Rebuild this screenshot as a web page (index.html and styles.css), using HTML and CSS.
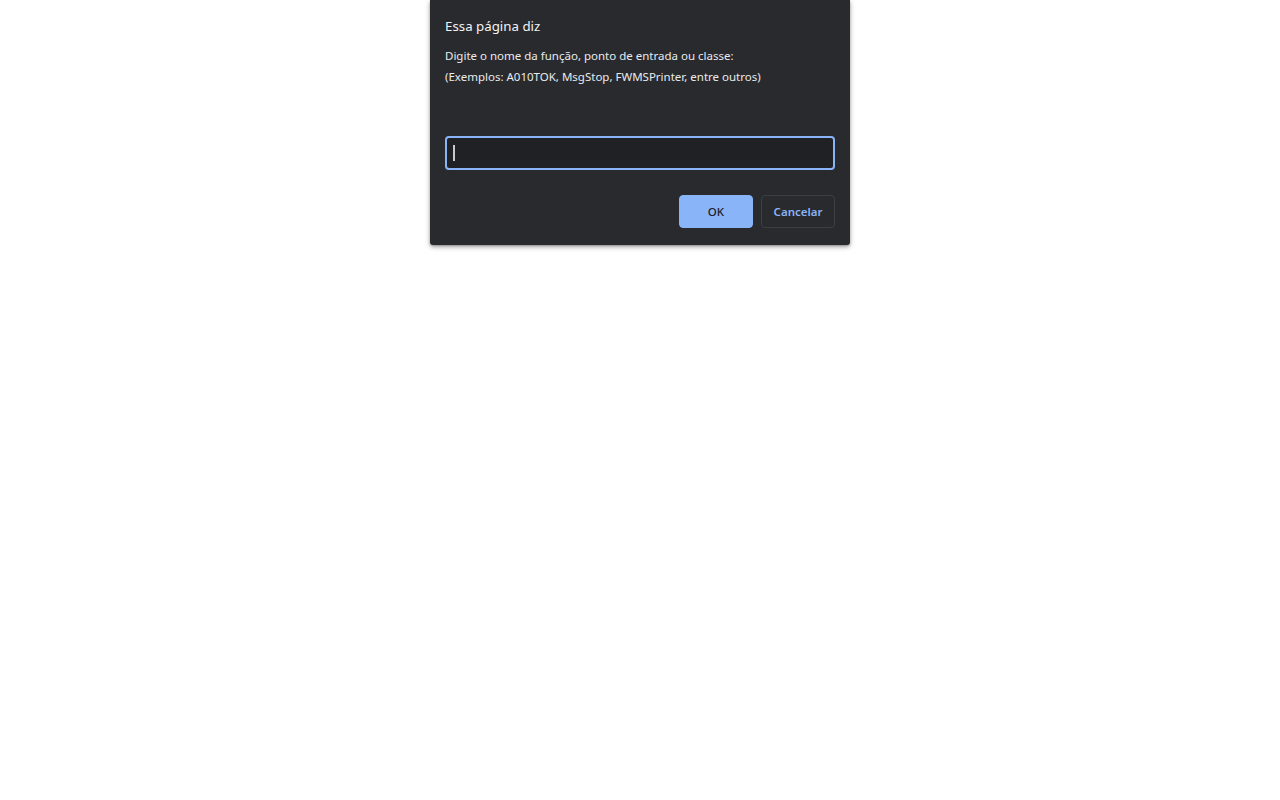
FILE: index.html
```html
<!DOCTYPE html>
<html lang="pt-BR">
<head>
<meta charset="utf-8">
<title>Essa página diz</title>
<link rel="stylesheet" href="styles.css">
</head>
<body>
<div class="overlay">
  <div class="dialog" role="dialog">
    <div class="title">Essa página diz</div>
    <div class="message">
      <div>Digite o nome da função, ponto de entrada ou classe:</div>
      <div>(Exemplos: A010TOK, MsgStop, FWMSPrinter, entre outros)</div>
    </div>
    <div class="field"><span class="caret"></span></div>
    <div class="actions">
      <button class="btn btn-ok">OK</button>
      <button class="btn btn-cancel">Cancelar</button>
    </div>
  </div>
</div>
</body>
</html>
```
FILE: styles.css
```css
html, body {
  margin: 0;
  padding: 0;
  background: #ffffff;
}
body {
  font-family: "Noto Sans", "Open Sans", sans-serif;
  width: 1280px;
  height: 800px;
}
.overlay {
  display: flex;
  justify-content: center;
}
.dialog {
  width: 420px;
  box-sizing: border-box;
  background: #292a2d;
  border-radius: 0 0 3px 3px;
  box-shadow: 0 2px 5px rgba(0, 0, 0, 0.35), 0 1px 2px rgba(0, 0, 0, 0.2);
  padding: 16px 15px 17px 15px;
  color: #e8eaed;
}
.title {
  font-size: 13.3px;
  line-height: 20px;
  height: 20px;
  color: #f1f3f4;
}
.message {
  margin-top: 10px;
  font-size: 11.5px;
  line-height: 20.5px;
  color: #e8eaed;
}
.field {
  margin-top: 49px;
  height: 34px;
  box-sizing: border-box;
  border: 2px solid #8ab4f8;
  border-radius: 4px;
  background: #202124;
  display: flex;
  align-items: center;
  padding-left: 6px;
}
.caret {
  width: 1.5px;
  height: 16px;
  background: #c8c8c8;
}
.actions {
  margin-top: 25px;
  display: flex;
  justify-content: flex-end;
  gap: 8px;
}
.btn {
  width: 74px;
  height: 33px;
  box-sizing: border-box;
  border-radius: 4px;
  font-family: "Noto Sans", "Open Sans", sans-serif;
  font-size: 11.5px;
  font-weight: 500;
  padding: 0;
  cursor: pointer;
}
.btn-ok {
  background: #8ab4f8;
  border: 1px solid #8ab4f8;
  color: #202124;
}
.btn-cancel {
  background: #292a2d;
  border: 1px solid #3c4043;
  color: #8ab4f8;
  font-weight: 600;
}
```
